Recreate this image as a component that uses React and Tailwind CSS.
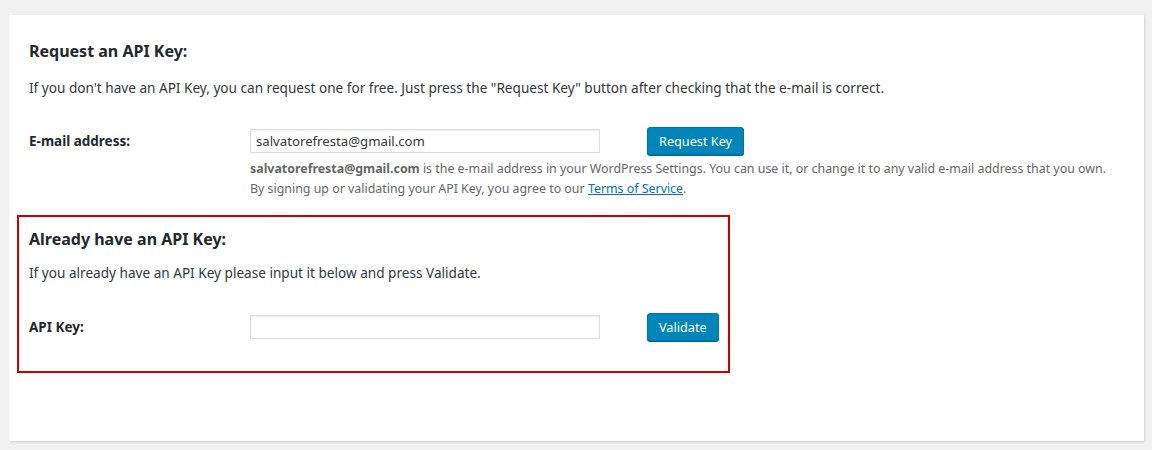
import React from 'react';

const font = { fontFamily: '"Noto Sans", "Open Sans", sans-serif' };

function Button({ children, className = '' }) {
  return (
    <button
      className={`h-[28px] shrink-0 rounded-[3px] border border-[#0073aa] bg-[#0085ba] px-[11px] text-[12.7px] leading-none text-white shadow-[0_1px_0_#006799] ${className}`}
    >
      {children}
    </button>
  );
}

function Field({ value = '' }) {
  return (
    <input
      type="text"
      defaultValue={value}
      className="h-[24px] w-[350px] shrink-0 border border-[#ddd] bg-white px-[5px] text-[13.2px] text-[#32373c] shadow-[inset_0_1px_2px_rgba(0,0,0,0.07)] outline-none"
    />
  );
}

export default function App() {
  return (
    <div className="min-h-[450px] bg-[#f1f1f1] pt-[15px] pl-[9px] pr-[8px]" style={font}>
      <div className="min-h-[426px] bg-white px-[8px] pt-[20px] shadow-[1px_1px_2px_rgba(0,0,0,0.13)]">
        {/* request section */}
        <section className="px-[12px]">
          <h2 className="text-[16px] font-bold leading-[32px] text-[#23282d]">Request an API Key:</h2>
          <p className="mt-[5px] text-[13.6px] leading-[32px] text-[#32373c]">
            If you don't have an API Key, you can request one for free. Just press the "Request Key" button after checking that the e-mail is correct.
          </p>
          <div className="mt-[23px] flex">
            <div className="flex h-[28px] w-[221px] shrink-0 items-center text-[13.5px] font-bold text-[#23282d]">E-mail address:</div>
            <div className="min-w-0 flex-1">
              <div className="flex items-center">
                <Field value="salvatorefresta@gmail.com" />
                <Button className="ml-[47px]">Request Key</Button>
              </div>
              <div className="mt-[4px] text-[12.4px] leading-[19.5px] text-[#666]">
                <p>
                  <b className="text-[#666]">salvatorefresta@gmail.com</b> is the e-mail address in your WordPress Settings. You can use it, or change it to any valid e-mail address that you own.
                </p>
                <p>
                  By signing up or validating your API Key, you agree to our{' '}
                  <a href="#" className="text-[#0073aa] underline">Terms of Service</a>.
                </p>
              </div>
            </div>
          </div>
        </section>

        {/* validate section */}
        <section className="mt-[17px] w-[713px] border-2 border-[#c00] px-[10px] pb-[30px] pt-[8px]">
          <h2 className="text-[16px] font-bold leading-[28px] text-[#23282d]">Already have an API Key:</h2>
          <p className="mt-[4px] text-[13.6px] leading-[32px] text-[#32373c]">
            If you already have an API Key please input it below and press Validate.
          </p>
          <div className="mt-[24px] flex items-center">
            <div className="w-[221px] shrink-0 text-[13.5px] font-bold text-[#23282d]">API Key:</div>
            <Field />
            <Button className="ml-[47px]">Validate</Button>
          </div>
        </section>
      </div>
    </div>
  );
}
